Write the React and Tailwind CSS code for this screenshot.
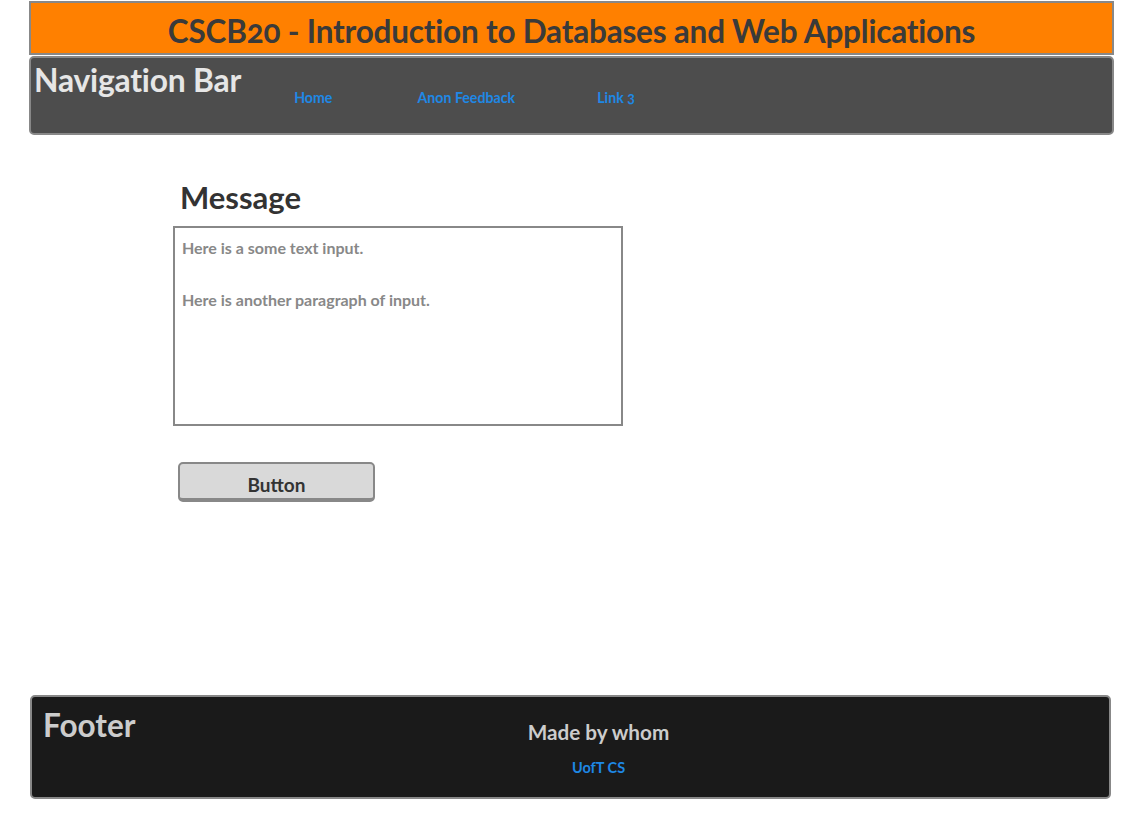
export default function App() {
  const font = { fontFamily: "Lato, 'Open Sans', sans-serif" };
  return (
    <div className="min-h-[819px] bg-white font-bold" style={font}>
      <div className="ml-[29px] w-[1085px] pt-[1px]">
        <header className="h-[54px] border-2 border-[#888888] bg-[#ff8000] flex items-center justify-center pt-[7px]">
          <h1 className="text-[31.5px] leading-none text-[#3a3a3a] font-bold oldstyle-nums tracking-[-0.2px]">
            CSCB20 - Introduction to Databases and Web Applications
          </h1>
        </header>
        <nav className="mt-[1px] h-[79px] rounded-[5px] border-2 border-[#888888] bg-[#4d4d4d] flex items-start">
          <div className="ml-[3px] mt-[4px] text-[31.8px] leading-[36px] text-[#e6e6e6] tracking-[-0.2px]">Navigation Bar</div>
          <div className="ml-[53px] mt-[31px] flex text-[14.2px] leading-[18px] text-[#1e88e5] oldstyle-nums">
            <a href="#">Home</a>
            <a href="#" className="ml-[85px]">Anon Feedback</a>
            <a href="#" className="ml-[82px]">Link 3</a>
          </div>
        </nav>
      </div>

      <main className="ml-[173px] mt-[42px] w-[450px]">
        <h2 className="ml-[7px] text-[31px] leading-[40px] text-[#333333]">Message</h2>
        <div className="mt-[9px] h-[200px] border-2 border-[#888888] px-[7px] pt-[10px] text-[16px] leading-[20px] text-[#888888]">
          <p>Here is a some text input.</p>
          <p className="mt-[32px]">Here is another paragraph of input.</p>
        </div>
        <button className="ml-[5px] mt-[36px] w-[197px] h-[40px] rounded-[5px] border-2 border-b-4 border-[#888888] bg-[#d9d9d9] text-[19px] leading-none text-[#333333] font-bold pt-[6px]">
          Button
        </button>
      </main>

      <footer className="ml-[30px] mt-[193px] w-[1081px] h-[104px] rounded-[5px] border-2 border-[#888888] bg-[#1a1a1a] flex">
        <div className="ml-[11px] mt-[10px] text-[31.5px] leading-[36px] text-[#cccccc] w-[150px]">Footer</div>
        <div className="flex-1 flex flex-col items-center pr-[105px]">
          <div className="mt-[22px] text-[20.7px] leading-[26px] text-[#cccccc]">Made by whom</div>
          <a href="#" className="mt-[14px] text-[14.5px] leading-[18px] text-[#1e88e5]">UofT CS</a>
        </div>
      </footer>
    </div>
  );
}
